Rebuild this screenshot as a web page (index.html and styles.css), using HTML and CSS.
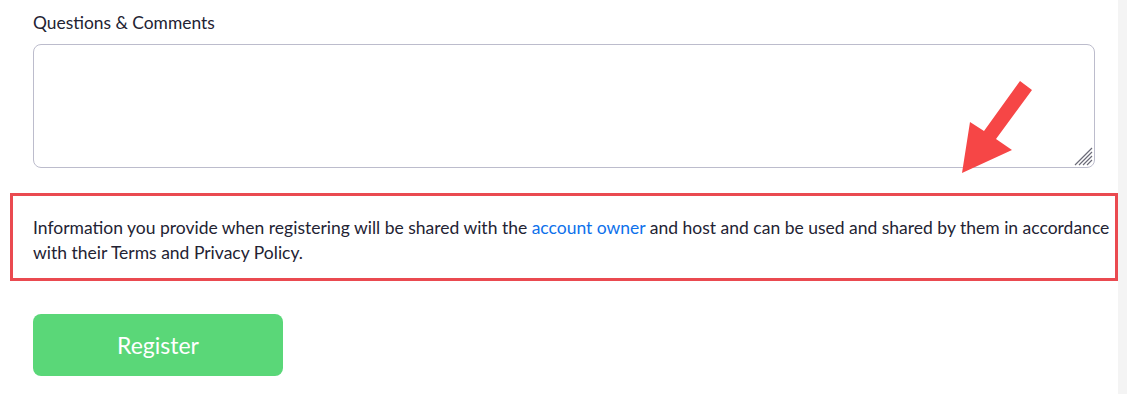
FILE: index.html
```html
<!DOCTYPE html>
<html lang="en">
<head>
  <meta charset="UTF-8">
  <title>Register</title>
  <link rel="stylesheet" href="styles.css">
</head>
<body>
  <div class="page">
    <div class="form">
      <label class="field-label" for="comments">Questions &amp; Comments</label>
      <div class="textarea-wrap">
        <textarea id="comments" class="comments"></textarea>
        <svg class="grip" width="22" height="22" viewBox="0 0 22 22">
          <path d="M3 20 L20 3 M7 20 L20 7 M11 20 L20 11 M15 20 L20 15" stroke="#6b6b78" stroke-width="1.2" fill="none"/>
        </svg>
      </div>
      <div class="notice">
        <p>Information you provide when registering will be shared with the <a href="javascript:;">account owner</a> and host and can be used and shared by them in accordance with their Terms and Privacy Policy.</p>
      </div>
      <button class="register">Register</button>
    </div>
    <div class="scrollbar"></div>

    <svg class="arrow" width="90" height="110" viewBox="955 75 90 110">
      <polygon points="1020,81 1032,90 996,139 1012,150 962,173 970,122 984,131" fill="#f64646"/>
    </svg>
  </div>
</body>
</html>
```

FILE: styles.css
```css
* {margin: 0; padding: 0; box-sizing: border-box;}
body {
  background: #fff;
  font-family: Lato, "Open Sans", sans-serif;
  color: #232333;
}
.page {
  position: relative;
  display: flex;
  height: 394px;
}
.form {
  flex: 1;
  padding: 12px 0 0 10px;
  display: flex;
  flex-direction: column;
  align-items: flex-start;
}
.field-label {
  font-size: 17.4px;
  line-height: 22px;
  margin-left: 23px;
  margin-bottom: 10px;
}
.textarea-wrap {
  position: relative;
  margin-left: 23px;
  width: 1062px;
  height: 124px;
}
.comments {
  display: block;
  width: 100%;
  height: 100%;
  border: 1px solid #bcbccc;
  border-radius: 8px;
  resize: none;
  outline: none;
  font-family: inherit;
  font-size: 16px;
  padding: 8px 12px;
}
.grip {
  position: absolute;
  right: 1px;
  bottom: 1px;
}
.notice {
  margin-top: 25px;
  width: 1108px;
  height: 88px;
  border: 3px solid #ea4a50;
  padding: 18.5px 0 0 20px;
}
.notice p {
  font-size: 17.5px;
  line-height: 25.6px;
}
.notice a {
  color: #0e71eb;
  text-decoration: none;
}
.register {
  margin: 33px 0 0 23px;
  width: 250px;
  height: 62px;
  border: none;
  border-radius: 8px;
  background: #5ad778;
  color: #fff;
  font-family: inherit;
  font-size: 23px;
  cursor: pointer;
}
.scrollbar {
  width: 14px;
  background: #f4f4f4;
}
.arrow {
  position: absolute;
  left: 955px;
  top: 75px;
}
```
